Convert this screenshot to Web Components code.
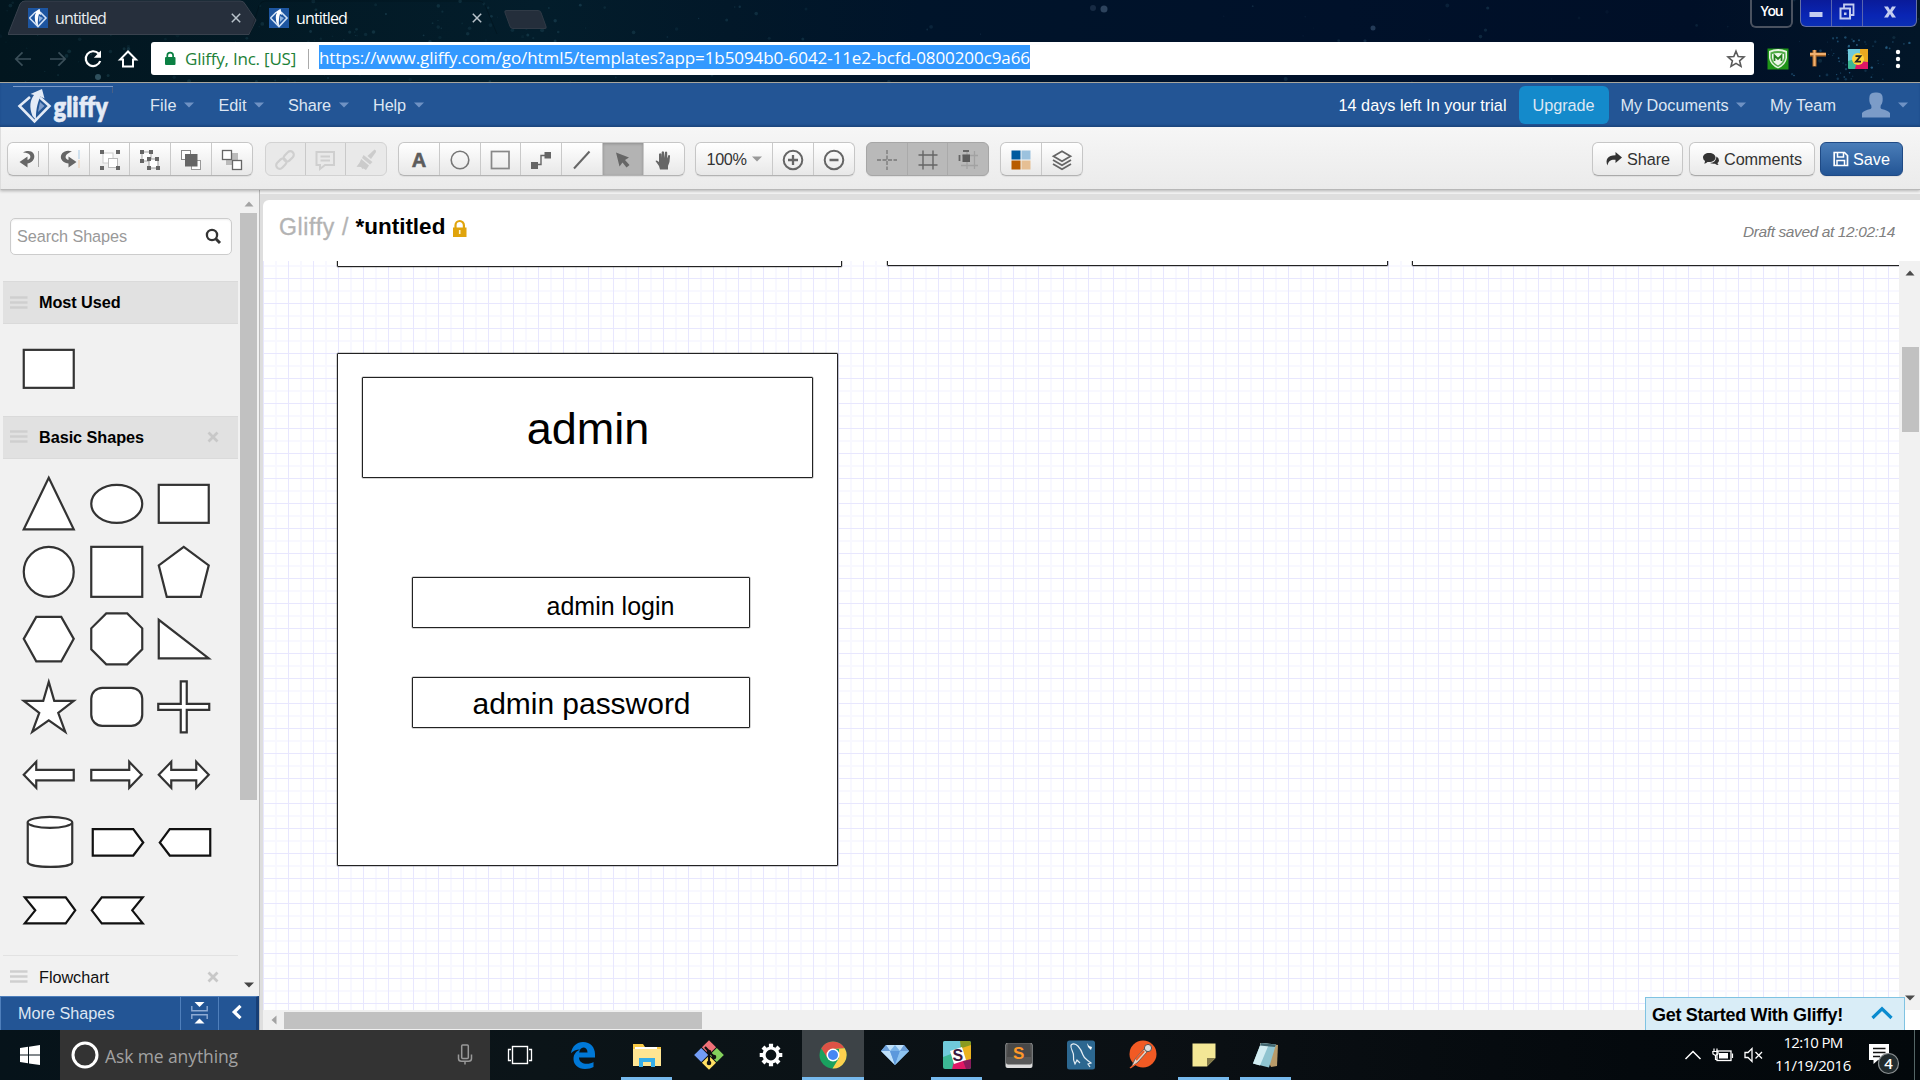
<!DOCTYPE html>
<html lang="en">
<head>
<meta charset="utf-8">
<title>untitled</title>
<style>
html,body{margin:0;padding:0;background:#000;overflow:hidden}
body{width:1920px;height:1080px;font-family:"Liberation Sans",Arial,sans-serif;font-size:16.25px}
</style>
</head>
<body>
<desktop-screen></desktop-screen>
<script>
const svg=(w,h,body,extra='')=>`<svg width="${w}" height="${h}" viewBox="0 0 ${w} ${h}" fill="none" ${extra}>${body}</svg>`;
const D='#666';
const ICONS={
 favicon:svg(20,20,`<rect width="20" height="20" fill="#1d55a0"/><path d="M1.500 10L7 4.500M12 4L18 10L10 18.500L1.500 10" stroke="#cfe0f5" stroke-width="1.600"/><path d="M7 12C6.500 8 7 6 8 5L6 4.600L11.500.8L13 7L11 6C10 9 9.500 14 10 18C8 16 7 14 7 12Z" fill="#fff"/><path d="M11 8l4 2-4 4z" fill="#8fb2de"/>`),
 close:svg(10,10,`<path d="M.8.800L9.200 9.200M9.200.8L.8 9.200" stroke="#b9c3cb" stroke-width="1.500"/>`),
 back:svg(18,16,`<path d="M17 8H2M8.500 1.300L1.800 8l6.700 6.700" stroke="#3a4e58" stroke-width="1.700"/>`),
 fwd:svg(18,16,`<path d="M1 8H16M9.500 1.300L16.200 8l-6.700 6.700" stroke="#3a4e58" stroke-width="1.700"/>`),
 reload:svg(20,20,`<path d="M15.600 4.600A7.400 7.400 0 1 0 17.200 12" stroke="#fff" stroke-width="2.200"/><path d="M18 1.500V8.800H10.800Z" fill="#fff"/>`),
 home:svg(18,18,`<path d="M1 9.600L9 1.500L17 9.600H14V16.500H4V9.600Z" stroke="#fff" stroke-width="2"/>`),
 lock:svg(12,16,`<rect x="1" y="6" width="10.500" height="8" rx="1" fill="#0b8043"/><path d="M3.300 7V4.500a2.900 2.900 0 0 1 5.800 0V7" stroke="#0b8043" stroke-width="1.700"/>`),
 star:svg(20,20,`<path d="M10 2.200L12.200 7.500L18 8L13.600 11.800L15 17.400L10 14.400L5 17.400L6.400 11.800L2 8L7.800 7.500Z" stroke="#5a5a5a" stroke-width="1.600"/>`),
 mcafee:svg(22,22,`<rect x=".5" y=".5" width="21" height="21" fill="#1f9418"/><path d="M2 3q9-4 18 0v7q-1 7-9 10.500Q3 17 2 10z" fill="#e7f3e0"/><path d="M3.500 4.500q7.500-2.800 15 0v5.500q-1 6-7.500 9Q4.500 16 3.500 10z" fill="#4fab45"/><path d="M5 6q6-2 12 0v4q-1 4.500-6 7.500Q6 14.500 5 10z" fill="#eef7ea"/><path d="M7.500 13V7.500L11 11l3.500-3.500V13" stroke="#25801d" stroke-width="1.800"/>`),
 tee:svg(20,22,`<path d="M2 6.500H18M6.500 2V18.500" stroke="#b06a28" stroke-width="4"/><path d="M2 6H18M6.500 2V18" stroke="#f0b070" stroke-width="2"/>`),
 slackz:svg(22,22,`<rect x="1" y="1" width="20" height="20" rx="1" fill="#3cb894"/><path d="M1 1h13l-3 9-10 3z" fill="#70cadb"/><path d="M13 1h8v14l-8-3z" fill="#e9a820"/><path d="M8 21l2-8 11 1v7z" fill="#e01765"/><circle cx="11" cy="11" r="6" fill="#ffd43b"/><path d="M8.500 8.200h5L9 13.700h5" stroke="#222" stroke-width="1.800"/>`),
 dots:svg(6,22,`<circle cx="3" cy="4" r="2.200" fill="#fff"/><circle cx="3" cy="11" r="2.200" fill="#fff"/><circle cx="3" cy="18" r="2.200" fill="#fff"/>`),
 caret:svg(10,6,`<path d="M0 .5H10L5 5.500Z" fill="currentColor"/>`),
 avatar:svg(30,26,`<path d="M1 25.500V21q2-2.500 8.500-4 1.500-1 .8-3.500C8 11 8 7 8.600 4 9.500 1 12 .5 15 .5s5.500.5 6.400 3.500C22 7 22 11 19.700 13.500q-.7 2.500.8 3.500 6.500 1.500 8.500 4v4.500z" fill="#7c9cc8"/>`),
 undo:svg(24,24,`<path d="M7 4.500C14 .5 20 5 18 10.500C17 13.500 14 15 11.500 15.500V19.500L3.500 14L11.500 8.500V12C15 11 15.500 7 12 5.500Q9.500 4.500 7 4.500Z" fill="${D}"/><path d="M22.500 3V19" stroke="#aaa"/>`),
 redo:svg(24,24,`<path d="M15 3.500C8 1 3 5.500 4 10.500C5 13.500 8 15 11.500 15.500V19.500L19.500 14L11.500 8.500V12C7.500 11 8 7 11 5.500Q13 4 15 3.500Z" fill="${D}"/><path d="M22 2V11" stroke="#a9cbe6"/><path d="M22 12V20" stroke="#ecc9a8"/>`),
 group:svg(24,24,`<rect x="5" y="5" width="10" height="10" fill="#fff" stroke="#ccc"/><rect x="10.500" y="10.500" width="9" height="9" fill="#fff" stroke="#bbb"/><path d="M2 2h4v4H2zM18 2h4v4h-4zM2 18h4v4H2zM18 18h4v4h-4z" fill="${D}"/>`),
 ungroup:svg(24,24,`<path d="M4 4h9v9H4z" fill="#fff" stroke="#aaa"/><path d="M11 11h9v9h-9z" fill="#fff" stroke="#999"/><path d="M2 2h4v4H2zM11 2h4v4h-4zM2 11h4v4H2zM9 9h4v4H9zM17 9h4v4h-4zM9 18h4v4H9zM18 18h4v4h-4z" fill="${D}"/>`),
 front:svg(24,24,`<rect x="2.500" y="2.500" width="9" height="9" fill="#fff" stroke="#888"/><rect x="12.500" y="12.500" width="9" height="9" fill="#fff" stroke="#999"/><rect x="6" y="6" width="12.500" height="12.500" fill="${D}"/>`),
 backz:svg(24,24,`<rect x="6" y="5" width="12" height="12" fill="#bbb"/><rect x="2.500" y="2.500" width="9" height="9" fill="#fff" stroke="${D}" stroke-width="1.300"/><rect x="12.500" y="12.500" width="9" height="9" fill="#fff" stroke="${D}" stroke-width="1.300"/>`),
 link:svg(24,24,`<g transform="rotate(-45 12 12)" stroke="#cfcfcf" stroke-width="2.200"><rect x="1" y="8.500" width="11.500" height="7" rx="3.500"/><rect x="11.500" y="8.500" width="11.500" height="7" rx="3.500"/></g>`),
 note:svg(24,24,`<path d="M3.500 4H21V17H12L7 21V17H3.500Z" stroke="#cfcfcf" stroke-width="2"/><path d="M7.500 8.500H17M7.500 12.500H17" stroke="#cfcfcf" stroke-width="2"/>`),
 brush:svg(24,24,`<path d="M20.500 1.500Q22.500 2 22 4L17 11L13.500 8Z" fill="#ccc"/><path d="M9.500 7L18.500 14L16 16.500L8 10Z" fill="#cdcdcd"/><path d="M7.200 11L15 17.500L12 22L9.500 20.500L8.500 21L7 19L2.500 18.800Q5.500 16 7.200 11Z" fill="#cbcbcb"/>`),
 circle:svg(24,24,`<circle cx="12" cy="12" r="8.800" stroke="#777" stroke-width="1.600"/>`),
 square:svg(24,24,`<rect x="3.500" y="3.500" width="17.500" height="17" stroke="#888" stroke-width="1.700"/>`),
 conn:svg(24,24,`<path d="M2 14h7v7H2zM15.500 4h6.500v6.500h-6.500z" fill="${D}"/><path d="M8 16.500H12V7.500H16" stroke="${D}" stroke-width="1.400"/>`),
 line:svg(24,24,`<path d="M4 20.500L19.500 3.500" stroke="${D}" stroke-width="2"/>`),
 pointer:svg(24,24,`<path d="M5 4.500L18 9.500L14 12L18.500 17L15.500 19.500L11.500 14.500L8.500 18.500Z" fill="${D}"/>`),
 hand:svg(24,24,`<path d="M8 21.500L7 18L3.500 13Q4.500 11.500 7 14V6Q8.200 4.500 9.300 6V10L9.700 4Q11 2.500 12 4V10L13 4Q14.500 3 15.200 4.500V10.500L16.500 7Q18.400 6.500 18 8.500Q18 14 16 18V21.500Z" fill="${D}"/>`),
 zin:svg(24,24,`<circle cx="12" cy="12" r="9.300" stroke="${D}" stroke-width="2"/><path d="M12 7V17M7 12H17" stroke="${D}" stroke-width="2.300"/>`),
 zout:svg(24,24,`<circle cx="12" cy="12" r="9.300" stroke="${D}" stroke-width="2"/><path d="M7.500 12H16.500" stroke="${D}" stroke-width="2.300"/>`),
 guides:svg(24,24,`<path d="M12 2V22M2 12H22" stroke="#777" stroke-width="1.300" stroke-dasharray="4 1.500"/>`),
 hash:svg(24,24,`<path d="M7 2.500V21.500M17 2.500V21.500M2.500 7H21.500M2.500 17H21.500" stroke="#666" stroke-width="1.400"/>`),
 snap:svg(24,24,`<path d="M11 3V21M18.500 3V21M6 7.500H22M5 17.500H22" stroke="#a2a2a2" stroke-width="1.300"/><rect x="6.500" y="6.500" width="7.500" height="7.500" fill="#5c5c5c"/><path d="M7 3h6M3.500 7v6" stroke="${D}" stroke-width="1.800"/>`),
 colors:svg(24,24,`<path d="M2.500 2.500h9v9h-9z" fill="#005b9f"/><path d="M12.500 2.500h9v9h-9z" fill="#9cc2de"/><path d="M2.500 12.500h9v9h-9z" fill="#b85c00"/><path d="M12.500 12.500h9v9h-9z" fill="#e6bf94"/>`),
 layers:svg(24,24,`<path d="M3.500 8.200L12 3.200L20.500 8.200L12 13.200Z" stroke="${D}" stroke-width="1.800"/><path d="M3 12L12 17.200L21 12M3 16L12 21.200L21 16" stroke="${D}" stroke-width="1.800"/>`),
 share:svg(18,16,`<path d="M10.500 1L17 6.500L10.500 12V8.700C6 8.300 3.500 9.500 2.500 14.500C0 9 2.500 4.300 10.500 4.300Z" fill="#333"/>`),
 chat:svg(18,16,`<path d="M7 2c4 0 6.500 2 6.500 4.500S11 11 7 11l-1.500-.1Q4 12.500 2 12.500 3 11.500 3 10 1 8.500 1 6.500C1 4 3.500 2 7 2z" fill="#333"/><path d="M14.500 5.500q2.500 1.500 2.500 4-.2 1.500-1.500 2.500.2 1.500 1.200 2-2 .2-3.700-1.300Q10 13 8 12q6-.5 6.500-6.500z" fill="#333"/>`),
 save:svg(16,16,`<path d="M1.200 1.500H11.500L14.500 4.500V14.500H1.200Z" stroke="#fff" stroke-width="1.700"/><path d="M4.500 2V6H10.500V2M4 14V9.500H11.500V14" stroke="#fff" stroke-width="1.500"/>`),
 search:svg(17,17,`<circle cx="7" cy="7" r="5.100" stroke="#333" stroke-width="2.300"/><path d="M10.800 10.800L15 15" stroke="#333" stroke-width="3"/>`),
 grip:svg(18,14,`<path d="M0 1.500H17.500M0 6.500H17.500M0 11.500H17.500" stroke="#cfcfcf" stroke-width="2.400"/>`),
 x:svg(12,12,`<path d="M1.500 1.500L10.500 10.500M10.500 1.500L1.500 10.500" stroke="#c8c8c8" stroke-width="2.800"/>`),
 padlock:svg(15,18,`<rect x="1" y="7.500" width="13.500" height="9.500" fill="#e0a40c"/><path d="M3.500 8V5.200a4.200 4.200 0 0 1 8.400 0V8" stroke="#e0a40c" stroke-width="2.200"/><path d="M7.700 10v4" stroke="#fff4cf" stroke-width="1.600"/>`),
 split:svg(18,24,`<path d="M3.500 1H13.500L8.500 6Z" fill="#fff"/><path d="M3.500 22.500H13.500L8.500 17.500Z" fill="#fff"/><path d="M.8 5V9.700H16.200V5M.8 18V13.700H16.200V18" stroke="#8eabd4" stroke-width="1.400"/>`),
 chevl:svg(12,16,`<path d="M9.500 1.800L3.200 8L9.500 14.200" stroke="#fff" stroke-width="3.200"/>`),
 up:svg(10,6,`<path d="M.5 5.500H9.500L5 .5Z" fill="currentColor"/>`),
 left:svg(6,10,`<path d="M5.500.5V9.500L.5 5Z" fill="#a3a3a3"/>`),
 chevup:svg(24,14,`<path d="M2.500 12L12 2.800L21.500 12" stroke="#0a8bcf" stroke-width="3.200"/>`),
 start:svg(22,22,`<path d="M1 4L9 2.800V10.400H1ZM10 2.700L21 1V10.400H10ZM1 11.500H9V19.200L1 18ZM10 11.500H21V21L10 19.400Z" fill="#fff"/>`),
 cortana:svg(28,28,`<circle cx="14" cy="14" r="12" stroke="#fff" stroke-width="3"/>`),
 mic:svg(16,22,`<rect x="4.700" y="1" width="6.600" height="13.500" rx="1" stroke="#999" stroke-width="1.500"/><path d="M1.500 10.500V14.500Q1.500 17.300 4.500 17.300H11.500Q14.500 17.300 14.500 14.500V10.500M8 17.500V20.500" stroke="#999" stroke-width="1.500"/>`),
 task:svg(26,20,`<rect x="5.500" y="1.500" width="15" height="17" stroke="#fff" stroke-width="1.400"/><path d="M4 4.500H1.500V15.500H4M22 4.500H24.500V15.500H22" stroke="#fff" stroke-width="1.300"/>`),
 edge:svg(28,28,`<path d="M2 12.200C3 5 8 1 14 1C21.500 1 26 6.500 26 13V16.500H10C10 21 14 22.800 17.500 22.800C20.500 22.800 23 22 24.500 21V26C22.500 27 19.500 28 16 28C9 28 4.500 23.500 4.500 18C4.500 13 7.500 10 11 8.500C7 8.500 4 10 2 12.200ZM10.200 11.500H18.500C18.500 8.500 16.500 6.600 14.500 6.600C12 6.600 10.500 9 10.200 11.500Z" fill="#0078d7"/>`),
 explorer:svg(30,28,`<path d="M1 3h10l2 3h16v19H1z" fill="#f8c944"/><path d="M3 6h22v3H3z" fill="#fff"/><path d="M1 8h28v17H1z" fill="#ffe592"/><path d="M7 26V17h16v9h-4v-5h-8v5z" fill="#35ade8"/>`),
 git:svg(32,32,`<g transform="rotate(45 16 16)"><path d="M5.500 5.500h10v10h-10z" fill="#f07178"/><path d="M16.500 5.500h10v10h-10z" fill="#84d05c"/><path d="M5.500 16.500h10v10h-10z" fill="#739df5"/><path d="M16.500 16.500h10v10h-10z" fill="#ffe063"/></g><path d="M12 8L16 12.500V25M16 13L21 17.500" stroke="#111" stroke-width="2.200"/><circle cx="16" cy="13" r="2.300" fill="#111"/><circle cx="16" cy="24" r="2.300" fill="#111"/><circle cx="21" cy="18" r="2.300" fill="#111"/>`),
 gear:svg(26,26,`<circle cx="13" cy="13" r="7" stroke="#fff" stroke-width="3.200"/><g stroke="#fff" stroke-width="4.200"><path d="M13 1.700V5M13 21V24.300M1.700 13H5M21 13H24.300M5 5L7.400 7.400M18.600 18.600L21 21M21 5L18.600 7.400M7.400 18.600L5 21"/></g>`),
 chrome:svg(28,28,`<circle cx="14" cy="14" r="13.500" fill="#1aa15f"/><path d="M2.300 7.250A13.500 13.500 0 0 1 25.700 7.250L14 8 8.500 17Z" fill="#de5246"/><path d="M25.700 7.250A13.500 13.500 0 0 1 13.500 27.500L20 17V8H14L25 7.250Z" fill="#fdd04e"/><circle cx="14" cy="14" r="6.500" fill="#fff"/><circle cx="14" cy="14" r="5" fill="#4687f4"/>`),
 diamond:svg(30,24,`<path d="M1 8L6 2H24L29 8L15 22Z" fill="#79b2e8"/><path d="M6 2L10 8L15 2L20 8L24 2ZM1 8H10L15 22Z" fill="#bfe0fa"/><path d="M10 8H20L15 22Z" fill="#5c98dc"/><path d="M20 8H29L15 22Z" fill="#8dc3f0"/><path d="M6 2L10 8H1ZM20 8L24 2L29 8Z" fill="#6c9fd8"/>`),
 slack:svg(28,28,`<rect width="28" height="28" rx="2" fill="#3cb894"/><path d="M0 2q0-2 2-2h17l-3 10-16 6z" fill="#70cadb"/><path d="M17 0h9q2 0 2 2v3l-10 3z" fill="#8a9a20"/><path d="M19 7l9-3v15l-6 1z" fill="#ecb320"/><path d="M9 28l2-7 11-2 3 9z" fill="#e01765"/><path d="M20 20l8-2v8q0 2-2 2h-3z" fill="#891c5c"/><path d="M7 10l12-4 4 13-12 4z" fill="#fff"/><text x="9.500" y="20" font-family="Liberation Sans" font-weight="bold" font-size="16" fill="#3b1a40">S</text>`),
 sublime:svg(30,28,`<rect x="1.500" y="2" width="27" height="25" rx="2" fill="#ddd"/><rect x="2" y="2" width="26" height="21.500" rx="2" fill="#595959"/><path d="M4 3h22l1 13H3z" fill="#484848"/><text x="9" y="17.500" font-family="Liberation Sans" font-weight="bold" font-size="17" fill="#ff9829">S</text>`),
 mysql:svg(30,30,`<rect x="1" y=".5" width="28" height="29" rx="2.500" fill="#2c6790"/><path d="M5 5C10 1 15 9 17 15C18 19 22 20 25 23L22 24L24 27M5 5C4 9 8 12 7.500 16C7 20 8 22 9 24L11 20L14 23" stroke="#e6eef4" stroke-width="1.200"/><path d="M21 3l2 3 3 1-1 3-3-3z" fill="#fff"/>`),
 postman:svg(30,30,`<circle cx="16" cy="14" r="13.500" fill="#f15a24"/><path d="M4 28L8 19L17 9L20 12L11 22Z" fill="#e8d5c8" stroke="#555" stroke-width=".8"/><path d="M9 20L17 11" stroke="#f15a24" stroke-width="2"/><circle cx="21" cy="8" r="3.600" fill="#ddd" stroke="#555"/><path d="M3 28l6-4" stroke="#f15a24" stroke-width="1.500"/>`),
 sticky:svg(24,24,`<path d="M.5.500H23.500V15L15 23.500H.5Z" fill="#f3e796"/><path d="M23.500 15H15V23.500Z" fill="#82794a"/>`),
 notepad:svg(30,30,`<path d="M9 3L27 5L26 26L20 27Z" fill="#b99b69"/><path d="M10 3L25 4.500L18 27.500L2 23.500Z" fill="#8fc4d0"/><path d="M10 3L18 4L9 25.500L2 23.500Z" fill="#d3edf2"/><path d="M10 3L25 4.500L24 7L9 5.500Z" fill="#42666f"/>`),
 traychev:svg(18,12,`<path d="M1.500 10L9 2.500L16.500 10" stroke="#fff" stroke-width="1.500"/>`),
 battery:svg(22,16,`<rect x="5" y="4" width="14" height="9.500" stroke="#fff" stroke-width="1.300"/><rect x="7" y="6" width="9" height="5.500" fill="#fff"/><path d="M20.500 6.500V11M2 1.500V4M5 1.500V4M.8 4.500H6V7L3.500 8.500L1 7ZM3.500 8.500V12.500H5" stroke="#fff" stroke-width="1.200"/>`),
 speaker:svg(20,16,`<path d="M1 5.500H4L8 1.500V14.500L4 10.500H1Z" stroke="#fff" stroke-width="1.300"/><path d="M11.500 5L18 11.500M18 5L11.500 11.500" stroke="#fff" stroke-width="1.300"/>`),
 action:svg(32,34,`<path d="M1 1H21V17H10L5.500 21V17H1Z" fill="#fff"/><path d="M5 5.500H17.500M5 9.500H17.500M5 13.500H12" stroke="#111" stroke-width="1.300"/><circle cx="20.500" cy="20.500" r="10" fill="#222b2e" stroke="#8a8f91" stroke-width="1.200"/><text x="20.500" y="25.700" text-anchor="middle" font-family="Open Sans" font-weight="600" font-size="15" fill="#fff">4</text>`),
 min:svg(14,8,`<rect x=".5" y="1" width="13" height="5" fill="#c4cdf0"/>`),
 restore:svg(16,18,`<path d="M5 5V1.500H14.500V12H11" stroke="#c4cdf0" stroke-width="1.800"/><rect x="1.500" y="5.500" width="9.500" height="10" stroke="#c4cdf0" stroke-width="2"/><rect x="5" y="9.500" width="2.500" height="2.500" fill="#c4cdf0"/>`),
 wclose:svg(14,14,`<path d="M1 1.500H5L7 5L9 1.500H13L9.200 7L13 12.500H9L7 9L5 12.500H1L4.800 7Z" fill="#c4cdf0"/>`),
 brand:svg(102,44,`<path d="M0 3.500H100" stroke="#7a9bcb" stroke-width="1.200"/><path d="M99.500 4V10" stroke="#486087"/><path d="M17 14L6.500 23L21.500 38.500L36.500 23L27 14.500" stroke="#e4ebf6" stroke-width="2.600"/><path d="M19.500 33C16 24 17 17 21 12L17.500 11L29 6L31.500 15.500L27.500 13.500C24 20 22.500 30 23 37Z" fill="#e4ebf6"/><path d="M27 19L31.500 23L25 29Z" fill="#7f9dcb"/><text x="40.500" y="33.700" font-family="Lato" font-weight="800" font-size="29" textLength="54.500" lengthAdjust="spacingAndGlyphs" fill="#e4ebf6" stroke="#e4ebf6" stroke-width=".5">gliffy</text>`),
};

const shape=(b,c='#333')=>`<svg width="67.500" height="67.700" viewBox="-33.750 -33.850 67.500 67.700" fill="#fff" stroke="${c}" stroke-width="2.200">${b}</svg>`;
const SHAPES={
 rect:shape('<rect x="-25" y="-19" width="50" height="38"/>'),
 triangle:shape('<path d="M0-26L25 25.500H-25Z"/>'),
 ellipse:shape('<ellipse rx="25.500" ry="19"/>'),
 circle:shape('<circle r="25"/>'),
 square:shape('<rect x="-25.500" y="-25" width="51" height="50"/>'),
 pentagon:shape('<path d="M0-25L25-6.500L17 25H-17L-25-6.500Z"/>'),
 hexagon:shape('<path d="M-12.500-22H12.500L25 0L12.500 22.500H-12.500L-25 0Z"/>'),
 octagon:shape('<path d="M-10.500-25.500H10.500L25.500-10.500V10.500L10.500 25.500H-10.500L-25.500 10.500V-10.500Z"/>'),
 right:shape('<path d="M-25-19V19.500H25Z"/>'),
 star:shape('<path d="M0-25L5.500-6H25L9.500 6L16.500 25L0 13.500L-16.500 25L-9.500 6L-25-6H-5.500Z"/>'),
 round:shape('<rect x="-25.500" y="-19" width="51" height="38" rx="11"/>'),
 cross:shape('<path d="M-3-25.500H3V-3H25.500V3H3V25.500H-3V3H-25.500V-3H-3Z"/>'),
 aleft:shape('<path d="M-25 0L-12.500-13V-5H25V5.500H-12.500V13Z"/>'),
 aright:shape('<path d="M25 0L12.500-13V-5H-25.500V5.500H12.500V13Z"/>'),
 aboth:shape('<path d="M-25 0L-12.500-13V-5H12.500V-13L25 0L12.500 13V5.500H-12.500V13Z"/>'),
 cyl:shape('<path d="M-21-19V20.500C-19 26.500 23 26.500 23.500 20.500V-19"/><ellipse cx="1.200" cy="-19.500" rx="22.300" ry="5.500"/>'),
 tagr:shape('<path d="M-24-12.800H16.500L26.500.7L16.500 13.700H-24Z"/>','#111'),
 tagl:shape('<path d="M-24 .7L-14-12.800H26.500V13.700H-14Z"/>','#111'),
 chevr:shape('<path d="M-24-12.500H17L26.500.5L17 13.500H-24L-13.500.5Z"/>','#111'),
 chevl:shape('<path d="M-25 .5L-15-12.500H26L15.500.5L26 13.500H-15Z"/>','#111'),
};

function define(name,html,setup){
  const t=document.createElement('template');
  t.innerHTML=html;
  customElements.define(name,class extends HTMLElement{
    constructor(){super();this.attachShadow({mode:'open'}).append(t.content.cloneNode(true));}
    connectedCallback(){if(setup)setup(this,this.shadowRoot);}
  });
}

define('g-icon',`<style>:host{display:inline-flex;flex:none}svg{display:block;overflow:visible}</style><span></span>`,
  (el,r)=>{r.querySelector('span').innerHTML=ICONS[el.getAttribute('name')]||'';});

define('shape-thumb',`<style>:host{display:block;width:67.500px;height:67.700px}svg{display:block}</style><span></span>`,
  (el,r)=>{r.querySelector('span').innerHTML=SHAPES[el.getAttribute('name')];});

/* ---------- browser chrome ---------- */
define('browser-tab',`<style>
:host{display:flex;position:relative;width:249px;height:35px;flex:none;align-items:center;color:#e8ecef;font:16px "Open Sans",sans-serif}
.bg{position:absolute;inset:0;z-index:-1}
.ic{margin:0 7px 0 20px}.t{margin-bottom:0;flex:1}.x{margin:0 16px 0 0}
</style><svg class="bg" width="249" height="35"><path d="M1 34L10 6Q12 1 16 1H230Q234 1 236 5L248 34" fill="none" stroke="#0003"/></svg>
<g-icon class="ic" name="favicon"></g-icon><span class="t"><slot></slot></span><g-icon class="x" name="close"></g-icon>`,
(el,r)=>{const p=r.querySelector('path');
 if(el.hasAttribute('idle')){p.setAttribute('d','M0 34.500L12 4Q13.500 1 17 1H232Q236 1 237 4L248 20L241 34.500Z');p.setAttribute('fill','#262f3c');p.setAttribute('stroke','#39424e');}});

define('browser-chrome',`<style>
:host{display:flex;flex-direction:column;height:83px;position:relative;z-index:0;overflow:hidden;background:linear-gradient(90deg,#02161f 0,#031d2b 28%,#021829 38%,#00142a 48%,#00112a 70%,#000f27 88%,#021628 100%);box-sizing:border-box;border-bottom:1.500px solid #a8a69d}
.sky{position:absolute;inset:0;z-index:-2}
.tabs{display:flex;height:36px;align-items:flex-start;padding-left:8px;box-sizing:border-box;position:relative}
browser-tab{height:35px;padding-bottom:0}
.tabs>browser-tab{box-sizing:border-box}
.tabs>browser-tab+browser-tab{margin-left:-8px}
.new{width:37px;height:19px;background:#242e3b;margin:10px 0 0 9px;transform:skewX(20deg);border-radius:3px;border:1px solid #303a46;box-sizing:border-box}
.grow{flex:1}
.you{width:43px;height:28px;border:2px solid #4a5260;border-top:0;border-radius:0 0 6px 6px;box-sizing:border-box;color:#fff;font:600 14px/22px "Open Sans";text-align:center;margin-right:7px}
.win{display:flex;width:117px;height:27px;margin-right:3px;background:linear-gradient(#0a1b9a,#0925b4 60%,#0b2fb4);border:1px solid #6570a5;border-top:0;border-radius:0 0 6px 6px;box-sizing:border-box}
.win>div{display:flex;align-items:center;justify-content:center;width:30px;border-right:1px solid #5865b0;padding-bottom:3px}
.win>div:last-child{flex:1;border:0}
.bar{display:flex;height:33px;margin-top:6px;align-items:center}
.omni{display:flex;align-items:center;width:1603px;height:33px;background:#fff;border-radius:3px;box-sizing:border-box;padding-left:13px;font:17px/24px "Open Sans",sans-serif}
.ev{color:#1d8138;margin-left:9px}
.sep{width:1px;height:20px;background:#aaa;margin:0 10px 0 12px}
.url{background:#3399ff;color:#fff;height:24px;width:711px;margin-top:-3px}
.url fit-label{margin-top:1px;line-height:24px;vertical-align:top}
</style>
<svg class="sky" width="1920" height="83"></svg>
<div class="tabs"><browser-tab idle><fit-label w="51">untitled</fit-label></browser-tab><browser-tab><fit-label w="51" style="color:#fff">untitled</fit-label></browser-tab><div class="new"></div><div class="grow"></div><div class="you"><fit-label w="22">You</fit-label></div><div class="win"><div><g-icon name="min" style="margin-top:6px"></g-icon></div><div><g-icon name="restore"></g-icon></div><div><g-icon name="wclose"></g-icon></div></div></div>
<div class="bar"><g-icon name="back" style="margin-left:14px"></g-icon><g-icon style="margin-left:17px" name="fwd"></g-icon><g-icon name="reload" style="margin-left:16px"></g-icon><g-icon name="home" style="margin-left:16px"></g-icon>
<div class="omni" style="margin-left:14px"><g-icon name="lock"></g-icon><fit-label class="ev" w="111">Gliffy, Inc. [US]</fit-label><span class="sep"></span><div class="url"><fit-label w="711">https://www.gliffy.com/go/html5/templates?app=1b5094b0-6042-11e2-bcfd-0800200c9a66</fit-label></div><span class="grow"></span><g-icon name="star" style="margin-right:8px"></g-icon></div>
<g-icon name="mcafee" style="margin-left:13px"></g-icon><g-icon name="tee" style="margin-left:19px"></g-icon><g-icon name="slackz" style="margin-left:19px"></g-icon><g-icon name="dots" style="margin-left:26px"></g-icon></div>`,
(el,r)=>{let s=11;const rnd=()=>(s=(s*16807)%2147483647)/2147483647;let o='';
 for(let i=0;i<260;i++){const x=rnd()<.6?rnd()*620:rnd()*1920;o+=`<circle cx="${x.toFixed(1)}" cy="${(rnd()*83).toFixed(1)}" r="${(.5+rnd()*1.500).toFixed(1)}" fill="#4f93a8" opacity="${(.05+rnd()*.16).toFixed(2)}"/>`;}
 for(let i=0;i<60;i++){o+=`<circle cx="${(1790+rnd()*60+rnd()*60).toFixed(1)}" cy="${(36+rnd()*44).toFixed(1)}" r="${(.4+rnd()).toFixed(1)}" fill="#3f8fc0" opacity="${(.2+rnd()*.4).toFixed(2)}"/>`;}
 o+='<circle cx="98" cy="77" r="3" fill="#5c8a99" opacity=".5"/><circle cx="1104" cy="9" r="3.500" fill="#4b6480" opacity=".6"/><circle cx="1093" cy="8" r="3" fill="#4b6480" opacity=".3"/><circle cx="1373" cy="28" r="2.500" fill="#3c5878" opacity=".6"/>';
 r.querySelector('.sky').innerHTML=o;});

/* ---------- application header ---------- */
define('menu-item',`<style>:host{display:inline-flex;align-items:center;color:#dde6f3}.c{color:#6f92c4;margin-left:7.500px}</style><slot></slot>`,
(el,r)=>{if(el.hasAttribute('drop'))r.innerHTML+='<g-icon class="c" name="caret"></g-icon>';});

define('app-header',`<style>
:host{display:flex;align-items:center;height:44px;background:#235595;box-shadow:inset 0 -2px 2px #1e4a84;color:#dde6f3}
.grow{flex:1}.up{display:flex;align-items:center;justify-content:center;width:90px;height:38px;border-radius:6px;background:#148acb;margin:0 12px}
</style>
<g-icon name="brand" style="margin-left:13px"></g-icon>
<menu-item drop style="margin-left:35px"><fit-label w="26.500">File</fit-label></menu-item>
<menu-item drop style="margin-left:24.500px"><fit-label w="28">Edit</fit-label></menu-item>
<menu-item drop style="margin-left:24px"><fit-label w="43">Share</fit-label></menu-item>
<menu-item drop style="margin-left:24.500px"><fit-label w="33">Help</fit-label></menu-item>
<span class="grow"></span><fit-label w="168" style="color:#fff">14 days left In your trial</fit-label>
<div class="up"><fit-label w="62">Upgrade</fit-label></div>
<menu-item drop><fit-label w="108">My Documents</fit-label></menu-item>
<menu-item style="margin-left:24px"><fit-label w="66">My Team</fit-label></menu-item>
<menu-item drop style="margin:0 12px 0 24.500px"><g-icon name="avatar"></g-icon></menu-item>`);

/* ---------- toolbar ---------- */
define('tool-group',`<style>
:host{display:flex;height:34px;box-sizing:border-box;border:1px solid #c6c6c6;border-bottom-color:#b3b3b3;border-radius:6px;background:linear-gradient(#fff,#e8e8e8);overflow:hidden;flex:none;box-shadow:0 1px 1px #0001}
:host([off]){background:#e9e9e9;border-color:#d2d2d2;box-shadow:none}
:host([on]){background:#b9b9b9;border-color:#a6a6a6}
div{display:flex;flex:1;align-items:center;justify-content:center;border-right:1px solid #c9c9c9;padding-top:1px}
:host([on]) div{border-color:#aaa}
div:last-child{border:0}.sel{background:#b3b3b3;box-shadow:inset 0 1px 3px #0003}
.a{font:bold 20px/32px "Liberation Sans";color:#5c5c5c;-webkit-text-stroke:.6px #5c5c5c}
.z{flex:0 0 76px;color:#333;font-size:16.250px;padding:0}.z g-icon{color:#999;margin-left:5px}
</style>`,
(el,r)=>{for(const n of el.getAttribute('tools').split(' ')){const d=document.createElement('div');
 if(n==='A')d.innerHTML='<span class="a">A</span>';
 else if(n==='100'){d.className='z';d.innerHTML='<fit-label w="40">100%</fit-label><g-icon name="caret"></g-icon>';}
 else d.innerHTML=`<g-icon name="${n}"></g-icon>`;
 if(n==='pointer')d.className='sel';r.append(d);}});

define('action-button',`<style>
:host{display:flex;align-items:center;justify-content:center;gap:4px;height:34px;box-sizing:border-box;border:1px solid #c6c6c6;border-bottom-color:#aaa;border-radius:6px;background:linear-gradient(#fff,#e9e9e9);color:#333;flex:none;box-shadow:0 1px 1px #0001}
:host([primary]){background:linear-gradient(#4a7db8,#235595);border-color:#1f4a85;color:#fff}
</style><slot></slot>`);

define('tool-bar',`<style>
:host{display:flex;height:63px;margin-bottom:-1px;box-sizing:border-box;border-left:1px solid #ddd;align-items:center;background:linear-gradient(#f6f6f6,#ebebeb);border-bottom:1px solid #b8b8b8;box-shadow:0 1px 3px #0004;position:relative;z-index:3;padding:2px 0 0 6px}
.grow{flex:1}tool-group+tool-group{margin-left:11.500px}
action-button{margin-left:6px}
</style>
<tool-group style="width:246px" tools="undo redo group ungroup front backz"></tool-group>
<tool-group off style="width:122px" tools="link note brush"></tool-group>
<tool-group style="width:286.500px" tools="A circle square conn line pointer hand"></tool-group>
<tool-group style="width:159.500px;margin-left:10.500px" tools="100 zin zout"></tool-group>
<tool-group on style="width:123px" tools="guides hash snap"></tool-group>
<tool-group style="width:83px;margin-left:11px" tools="colors layers"></tool-group>
<span class="grow"></span>
<action-button style="width:91px"><g-icon name="share"></g-icon><fit-label w="43">Share</fit-label></action-button>
<action-button style="width:126px"><g-icon name="chat"></g-icon><fit-label w="78">Comments</fit-label></action-button>
<action-button primary style="width:83px;margin:0 17px 0 5px"><g-icon name="save"></g-icon><fit-label w="37">Save</fit-label></action-button>`);

/* ---------- shape library ---------- */
define('library-section',`<style>
:host{display:block;width:235px;margin-left:3px}
header{display:flex;align-items:center;height:43px;box-sizing:border-box;background:#e1e1e1;border-top:1px solid #dadada;border-bottom:1px solid #dadada;color:#000;font-weight:bold;padding-left:7px}
:host([plain]) header{background:none;border-bottom:0;border-top:1.500px solid #e2e2e2;font-weight:normal;color:#111}
.t{margin-left:11px;flex:1}.x{margin-right:19px}
.g{display:grid;grid-template-columns:repeat(3,67.500px);padding-left:12.250px}
</style><header><g-icon name="grip"></g-icon><span class="t"><slot name="title"></slot></span></header><div class="g"><slot></slot></div>`,
(el,r)=>{if(el.hasAttribute('closable'))r.querySelector('header').insertAdjacentHTML('beforeend','<g-icon class="x" name="x"></g-icon>');});

define('shape-panel',`<style>
:host{display:flex;flex-direction:column;background:#f1f1f1;border-right:1px solid #bbb;flex:none;box-sizing:border-box;width:260px}
.body{display:flex;flex:1;min-height:0}
.lib{width:240px;overflow:hidden}
.search{display:flex;align-items:center;width:222px;height:37px;box-sizing:border-box;border:1.500px solid #ccc;border-radius:5px;background:#fff;margin:29px 0 26px 10px;padding:0 9px 0 6px;color:#999;justify-content:space-between;box-shadow:inset 0 1px 2px #0001}
.sb{width:17px;margin-right:2px;display:flex;flex-direction:column;align-items:center}
.sb i{width:17px;height:587px;background:#c1c1c1;margin-top:6px}
footer{display:flex;height:34px;box-sizing:border-box;background:#235595;border-top:1.500px solid #4f7fbb;border-left:1px solid #4f7fbb;border-right:3px solid #173e75;color:#dde6f3;align-items:center;padding-bottom:1px}
footer>span{flex:1;padding-left:17px}
footer>div{width:38px;height:33px;box-sizing:border-box;border-left:1px solid #4f7fbb;display:flex;align-items:center;justify-content:center}
</style>
<div class="body"><div class="lib">
<div class="search"><fit-label w="110">Search Shapes</fit-label><g-icon name="search"></g-icon></div>
<library-section style="height:134.500px"><fit-label slot="title" w="81.500">Most Used</fit-label><shape-thumb name="rect" style="margin-top:10.500px"></shape-thumb></library-section>
<library-section closable style="height:539.500px" id="basic"><fit-label slot="title" w="105">Basic Shapes</fit-label></library-section>
<library-section closable plain><fit-label slot="title" w="70">Flowchart</fit-label></library-section>
</div><div class="sb"><g-icon name="up" style="color:#a3a3a3;margin-top:12px;height:6px"></g-icon><i></i><g-icon name="caret" style="color:#444;margin:182px 0 0"></g-icon></div></div>
<footer><span><fit-label w="96.500">More Shapes</fit-label></span><div><g-icon name="split"></g-icon></div><div><g-icon name="chevl" style="margin:0 2px 2px 0"></g-icon></div></footer>`,
(el,r)=>{const b=r.querySelector('#basic');
 'triangle ellipse rect circle square pentagon hexagon octagon right star round cross aleft aright aboth cyl tagr tagl chevr chevl'.split(' ').forEach((n,i)=>{
  const s=document.createElement('shape-thumb');s.setAttribute('name',n);if(i<3)s.style.marginTop='11.500px';b.append(s);});});

/* ---------- drawing surface ---------- */
define('diagram-box',`<style>:host{position:absolute;box-sizing:border-box;border:1px solid #222;box-shadow:0 0 0 .5px #0005;border-radius:1px;background:#fff;color:#000;display:flex;align-items:center;justify-content:center;white-space:nowrap}</style><slot></slot>`);

define('diagram-canvas',`<style>
:host{display:block;position:relative;overflow:hidden;flex:1;background-color:#fff;
background-image:linear-gradient(90deg,#e8e7fe 1px,transparent 1px),linear-gradient(#e8e7fe 1px,transparent 1px),linear-gradient(90deg,#f8f8ff 2px,transparent 2px),linear-gradient(#f8f8ff 2px,transparent 2px);
background-size:25px 25px;background-position:0 0,0 17px,12px 0,0 4px}
</style>
<diagram-box style="left:74px;top:-200px;width:505px;height:206px"></diagram-box>
<diagram-box style="left:624px;top:-200px;width:501px;height:205px"></diagram-box>
<diagram-box style="left:1149px;top:-200px;width:600px;height:205px"></diagram-box>
<diagram-box style="left:74px;top:92px;width:501px;height:513px"></diagram-box>
<diagram-box style="left:99px;top:116px;width:451px;height:101px;font-size:45px"><fit-label w="122.500" style="margin:2px 0 0 1px">admin</fit-label></diagram-box>
<diagram-box style="left:149px;top:316px;width:338px;height:51px;font-size:25px"><fit-label w="128" style="margin:8px 0 0 59px">admin login</fit-label></diagram-box>
<diagram-box style="left:149px;top:416px;width:338px;height:51px;font-size:30px"><fit-label w="218" style="margin:2px 0 0 1px">admin password</fit-label></diagram-box>`);

define('document-pane',`<style>
:host{display:flex;flex-direction:column;flex:1;background:linear-gradient(#f3f3f3 5px,#dedede 5px);padding:11px 0 0 3px;min-width:0;position:relative}
.t{display:flex;align-items:center;height:61px;box-sizing:border-box;background:#fff;border-radius:6px 0 0 0;padding:0 25px 7px 16px;font-size:23px;color:#b3b3b3;-webkit-text-stroke:.35px #b3b3b3}
.t b{color:#000;font-size:22.500px;margin:0 7px 0 7px;-webkit-text-stroke:0}.g{flex:1}
.d{font-style:italic;font-size:15.500px;color:#808080;margin-top:9px;-webkit-text-stroke:0}
.m{display:flex;height:749px}
.v{width:21px;background:#f1f1f1;display:flex;flex-direction:column;align-items:center;color:#4b4b4b}
.v i{width:17px;height:85px;background:#c1c1c1;margin:71px 0 0 2px}
.h{display:flex;align-items:center;height:20px;background:#f0f0f0}
.h g-icon{margin:0 7px 0 8px}.h i{width:418px;height:17px;background:#c1c1c1}
.h u{width:15px;height:20px;background:#fff;margin-left:auto}
.gs{position:absolute;right:15px;bottom:0;width:260px;height:33px;box-sizing:border-box;border:1.500px solid #7fc3e2;border-bottom:0;background:#d9edf7;display:flex;align-items:center;justify-content:space-between;padding:3px 10px 0 6px;color:#000;font:bold 18px "Liberation Sans"}
</style>
<div class="t"><fit-label w="56">Gliffy</fit-label><span style="margin-left:7px">/</span><b><fit-label w="90">*untitled</fit-label></b><g-icon name="padlock" style="margin-top:3px"></g-icon><span class="g"></span><fit-label class="d" w="152">Draft saved at 12:02:14</fit-label></div>
<div class="m"><diagram-canvas></diagram-canvas><div class="v"><g-icon name="up" style="margin-top:9px"></g-icon><i></i><g-icon name="caret" style="margin-top:563px"></g-icon></div></div>
<div class="h"><g-icon name="left"></g-icon><i></i><u></u></div>
<div class="gs"><fit-label w="191">Get Started With Gliffy!</fit-label><g-icon name="chevup" style="margin-bottom:5px"></g-icon></div>`);

/* ---------- operating system taskbar ---------- */
define('task-button',`<style>
:host{display:flex;align-items:center;justify-content:center;width:61.950px;height:50px;flex:none;box-sizing:border-box;position:relative}
:host([active]){background:#3d4347}
i{position:absolute;bottom:0;left:5px;right:6px;height:3px;background:#76b9ed;display:none}
:host([open]) i{display:block}:host([active]) i{display:block;left:0;right:0}
</style><slot></slot><i></i>`);

define('task-bar',`<style>
:host{display:flex;align-items:center;height:50px;background:linear-gradient(90deg,#06131a,#0b1418 28%,#0b1014 60%,#04090d 85%,#03080b);color:#fff}
.s{width:60px;display:flex;justify-content:center}
.q{display:flex;align-items:center;width:430px;height:50px;background:#333;box-sizing:border-box;padding:0 17px 0 11px;color:#a2a2a2;font:17.500px "Open Sans"}
.q .m{margin-left:auto}
.g{flex:1}
.clock{font:15px/23px "Open Sans";width:78px;text-align:center;margin:0 16px 0 10px;padding-bottom:2px}
.end{width:1px;height:50px;background:#566;margin:0 5px 0 14px}
</style>
<div class="s"><g-icon name="start"></g-icon></div>
<div class="q"><g-icon name="cortana"></g-icon><fit-label w="133" style="margin:1px 0 0 6px">Ask me anything</fit-label><g-icon class="m" name="mic"></g-icon></div>
<task-button style="width:60px"><g-icon name="task"></g-icon></task-button>
<task-button style="width:66px"><g-icon name="edge"></g-icon></task-button>
<task-button open><g-icon name="explorer"></g-icon></task-button>
<task-button><g-icon name="git"></g-icon></task-button>
<task-button><g-icon name="gear"></g-icon></task-button>
<task-button active><g-icon name="chrome"></g-icon></task-button>
<task-button><g-icon name="diamond"></g-icon></task-button>
<task-button open><g-icon name="slack"></g-icon></task-button>
<task-button><g-icon name="sublime"></g-icon></task-button>
<task-button><g-icon name="mysql"></g-icon></task-button>
<task-button><g-icon name="postman"></g-icon></task-button>
<task-button open><g-icon name="sticky"></g-icon></task-button>
<task-button open><g-icon name="notepad"></g-icon></task-button>
<span class="g"></span>
<g-icon name="traychev"></g-icon><g-icon name="battery" style="margin-left:10px"></g-icon><g-icon name="speaker" style="margin-left:10px"></g-icon>
<div class="clock"><fit-label w="59">12:10 PM</fit-label><br><fit-label w="76">11/19/2016</fit-label></div>
<g-icon name="action" style="margin-top:10px"></g-icon><span class="end"></span>`);

define('desktop-screen',`<style>
:host{display:flex;flex-direction:column;width:1920px;height:1080px;overflow:hidden}
.work{display:flex;height:841px;background:#f1f1f1}
</style><browser-chrome></browser-chrome><app-header></app-header><tool-bar></tool-bar><div class="work"><shape-panel></shape-panel><document-pane></document-pane></div><task-bar></task-bar>`);

/* Text whose letter spacing is tuned so that it spans the width in its "w" attribute. */
define('fit-label',`<style>:host{display:inline-block;white-space:nowrap}</style><slot></slot>`,el=>{
  el.style.letterSpacing='0';
  const w=+el.getAttribute('w'),n=el.textContent.length,now=el.getBoundingClientRect().width;
  if(w&&now)el.style.letterSpacing=((w-now)/n).toFixed(3)+'px';
});
</script>
</body>
</html>
